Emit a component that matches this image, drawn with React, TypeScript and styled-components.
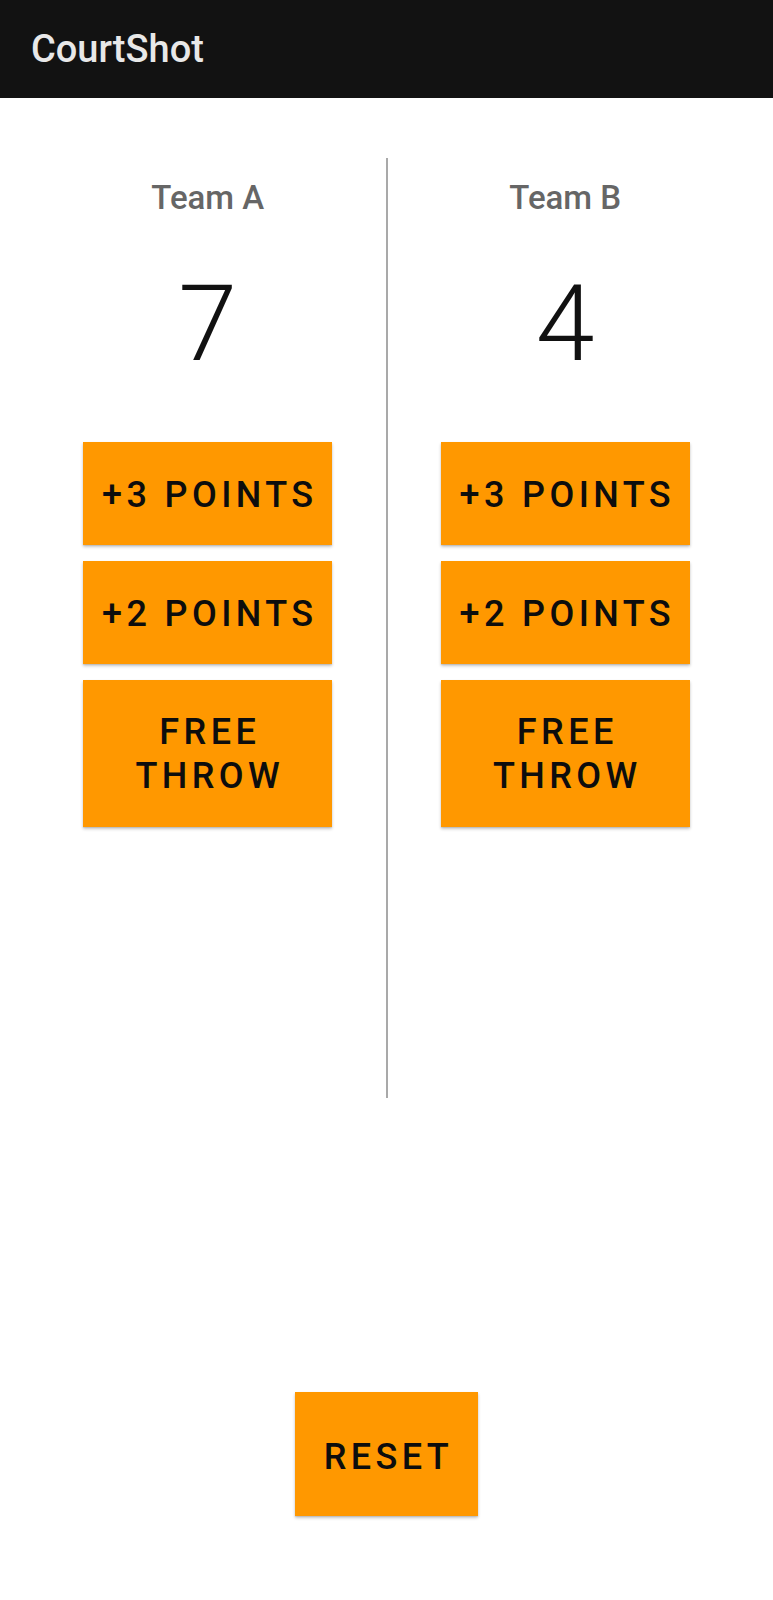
import React from "react";
import styled, { createGlobalStyle } from "styled-components";

const GlobalStyle = createGlobalStyle`
  html, body {
    margin: 0;
    padding: 0;
    background: #ffffff;
    font-family: Roboto, "Noto Sans", Arial, sans-serif;
  }
  * { box-sizing: border-box; }
`;

const Page = styled.div`
  width: 773px;
  min-height: 1600px;
  display: flex;
  flex-direction: column;
  background: #ffffff;
`;

const AppBar = styled.header`
  height: 98px;
  background: #121212;
  padding-left: 31px;
  display: flex;
  align-items: center;
`;

const Title = styled.h1`
  margin: 0;
  font-size: 38px;
  font-weight: 500;
  line-height: 98px;
  color: #e8e8e8;
`;

const Main = styled.main`
  flex: 1;
  display: flex;
  flex-direction: column;
  padding: 60px 30px 84px;
`;

const Scoreboard = styled.div`
  height: 940px;
  display: flex;
`;

const TeamColumn = styled.section`
  flex: 1;
  display: flex;
  flex-direction: column;
  align-items: center;
`;

const Divider = styled.div`
  width: 2px;
  background: #a9a9a9;
`;

const TeamName = styled.div`
  margin-top: 20px;
  font-size: 33px;
  font-weight: 500;
  line-height: 40px;
  color: #666666;
`;

const Score = styled.div`
  margin-top: 53px;
  font-size: 106px;
  font-weight: 300;
  line-height: 106px;
  color: #111111;
`;

const ButtonStack = styled.div`
  margin-top: 65px;
  display: flex;
  flex-direction: column;
  gap: 16px;
`;

const ScoreButton = styled.button<{ $width?: number; $padTop?: number; $padBottom?: number }>`
  width: ${(p) => p.$width ?? 249}px;
  padding: ${(p) => p.$padTop ?? 31}px 4px ${(p) => p.$padBottom ?? 28}px 8px;
  border: none;
  border-radius: 0;
  background: #ff9800;
  color: #0d0d0d;
  font-family: Roboto, "Noto Sans", Arial, sans-serif;
  font-size: 36px;
  font-weight: 500;
  line-height: 44px;
  letter-spacing: 4.4px;
  text-transform: uppercase;
  text-align: center;
  white-space: pre-line;
  box-shadow: 0 2px 3px rgba(0, 0, 0, 0.22), 0 1px 1px rgba(0, 0, 0, 0.08);
  cursor: pointer;
`;

const ResetRow = styled.div`
  margin-top: 294px;
  display: flex;
  justify-content: center;
`;

const teams = [
  { name: "Team A", score: 7 },
  { name: "Team B", score: 4 },
];

const actions = [
  { label: "+3 Points", padTop: 31, padBottom: 28 },
  { label: "+2 Points", padTop: 31, padBottom: 28 },
  { label: "Free\nThrow", padTop: 30, padBottom: 29 },
];

function Team({ name, score }: { name: string; score: number }) {
  return (
    <TeamColumn>
      <TeamName>{name}</TeamName>
      <Score>{score}</Score>
      <ButtonStack>
        {actions.map((a) => (
          <ScoreButton key={a.label} $padTop={a.padTop} $padBottom={a.padBottom}>
            {a.label}
          </ScoreButton>
        ))}
      </ButtonStack>
    </TeamColumn>
  );
}

export default function App() {
  return (
    <>
      <GlobalStyle />
      <Page>
        <AppBar>
          <Title>CourtShot</Title>
        </AppBar>
        <Main>
          <Scoreboard>
            <Team {...teams[0]} />
            <Divider />
            <Team {...teams[1]} />
          </Scoreboard>
          <ResetRow>
            <ScoreButton $width={183} $padTop={43} $padBottom={37}>
              Reset
            </ScoreButton>
          </ResetRow>
        </Main>
      </Page>
    </>
  );
}
